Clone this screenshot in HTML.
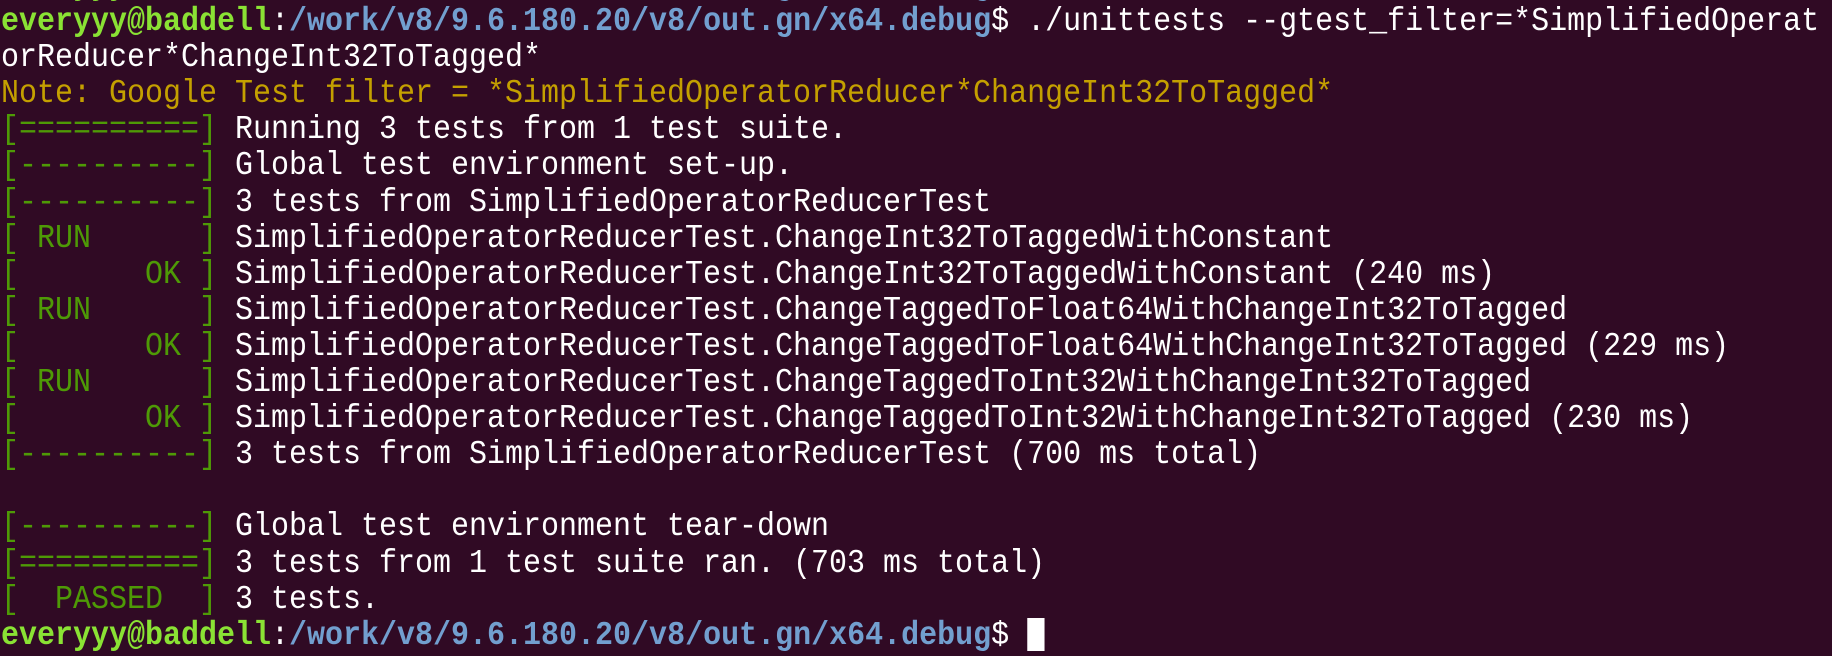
<!DOCTYPE html>
<html><head><meta charset="utf-8"><style>
html,body{margin:0;padding:0;background:#300a24;width:1832px;height:656px;overflow:hidden}
pre{margin:0;position:absolute;left:1px;top:-32px;font-family:"Liberation Mono",monospace;font-size:33px;line-height:36.1px;color:#ffffff;white-space:pre;transform:scaleX(0.909);transform-origin:0 0}
.p{color:#8ae234;font-weight:bold}.d{color:#729fcf;font-weight:bold}
.y{color:#c4a000}.g{color:#4e9a06}
.c{display:inline-block;width:19px;height:33px;background:#fff;vertical-align:-7px}
</style></head><body><pre><span class="p">everyyy@baddell</span>:<span class="d">/work/v8/9.6.180.20/v8/out.gn/x64.debug</span>$ 
<span class="p">everyyy@baddell</span>:<span class="d">/work/v8/9.6.180.20/v8/out.gn/x64.debug</span>$ ./unittests --gtest_filter=*SimplifiedOperat
orReducer*ChangeInt32ToTagged*
<span class="y">Note: Google Test filter = *SimplifiedOperatorReducer*ChangeInt32ToTagged*</span>
<span class="g">[==========]</span> Running 3 tests from 1 test suite.
<span class="g">[----------]</span> Global test environment set-up.
<span class="g">[----------]</span> 3 tests from SimplifiedOperatorReducerTest
<span class="g">[ RUN      ]</span> SimplifiedOperatorReducerTest.ChangeInt32ToTaggedWithConstant
<span class="g">[       OK ]</span> SimplifiedOperatorReducerTest.ChangeInt32ToTaggedWithConstant (240 ms)
<span class="g">[ RUN      ]</span> SimplifiedOperatorReducerTest.ChangeTaggedToFloat64WithChangeInt32ToTagged
<span class="g">[       OK ]</span> SimplifiedOperatorReducerTest.ChangeTaggedToFloat64WithChangeInt32ToTagged (229 ms)
<span class="g">[ RUN      ]</span> SimplifiedOperatorReducerTest.ChangeTaggedToInt32WithChangeInt32ToTagged
<span class="g">[       OK ]</span> SimplifiedOperatorReducerTest.ChangeTaggedToInt32WithChangeInt32ToTagged (230 ms)
<span class="g">[----------]</span> 3 tests from SimplifiedOperatorReducerTest (700 ms total)

<span class="g">[----------]</span> Global test environment tear-down
<span class="g">[==========]</span> 3 tests from 1 test suite ran. (703 ms total)
<span class="g">[  PASSED  ]</span> 3 tests.
<span class="p">everyyy@baddell</span>:<span class="d">/work/v8/9.6.180.20/v8/out.gn/x64.debug</span>$ <span class="c"></span></pre></body></html>
